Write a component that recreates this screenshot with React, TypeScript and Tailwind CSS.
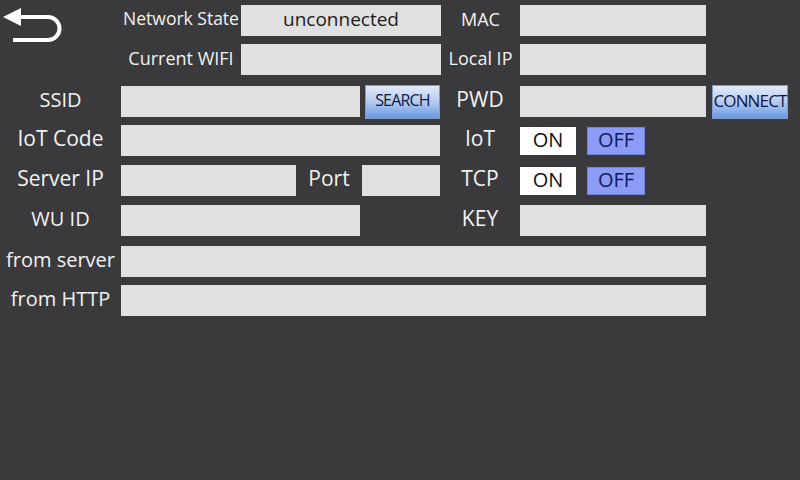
import React from 'react';

const font = { fontFamily: '"Open Sans", "Noto Sans", sans-serif' };

const Field: React.FC<{ w: string; children?: React.ReactNode }> = ({ w, children }) => (
  <div className={`${w} h-[31px] shrink-0 bg-[#e0e0e0] flex items-center justify-center text-[19px] text-[#1c1c1c]`}>
    <span className="-mt-[3px]">{children}</span>
  </div>
);

const Label: React.FC<{ w: string; size?: string; children: React.ReactNode }> = ({ w, size = 'text-[21px]', children }) => (
  <div className={`${w} shrink-0 -mt-[4px] text-center text-[#f2f2f2] ${size} leading-none whitespace-nowrap`}>{children}</div>
);

const BlueButton: React.FC<{ w: string; size: string; children: React.ReactNode }> = ({ w, size, children }) => (
  <button className={`${w} h-[34px] shrink-0 border border-[#7f9acb] bg-gradient-to-b from-[#e2eaf8] via-[#b4cbef] to-[#6a98e2] text-[#0c1848] ${size} tracking-tighter leading-none flex items-center justify-center`}>
    <span className="-mt-[3px]">{children}</span>
  </button>
);

const Toggle: React.FC = () => (
  <div className="flex items-center">
    <div className="w-[56px] h-[28px] bg-white text-[20px] text-[#111] flex items-center justify-center">
      <span className="-mt-[2px]">ON</span>
    </div>
    <div className="ml-[11px] w-[58px] h-[28px] bg-[#8b9bf6] border border-[#6e7fd6] text-[20px] text-[#0f1a58] flex items-center justify-center">
      <span className="-mt-[2px]">OFF</span>
    </div>
  </div>
);

const BackArrow: React.FC = () => (
  <svg width="66" height="40" viewBox="0 0 66 40" className="-mt-[1px]">
    <path d="M19 13 H48 A11.5 11.5 0 0 1 48 36 H13" fill="none" stroke="#fff" strokeWidth="4" />
    <polygon points="3,13 21,4 21,22" fill="#fff" />
  </svg>
);

export default function App() {
  return (
    <div className="w-[800px] h-[480px] bg-[#3a3a3c] overflow-hidden flex flex-col" style={font}>
      {/* row 1 */}
      <div className="mt-[5px] h-[31px] flex items-center">
        <div className="w-[121px] h-[31px] shrink-0 flex items-start">
          <BackArrow />
        </div>
        <Label w="w-[120px]" size="text-[17.5px]">Network State</Label>
        <Field w="w-[200px]">unconnected</Field>
        <Label w="w-[79px]" size="text-[18px]">MAC</Label>
        <Field w="w-[186px]" />
      </div>

      {/* row 2 */}
      <div className="mt-[8px] h-[31px] flex items-center">
        <div className="w-[121px] shrink-0" />
        <Label w="w-[120px]" size="text-[18px]">Current WIFI</Label>
        <Field w="w-[200px]" />
        <Label w="w-[79px]" size="text-[18px]">Local IP</Label>
        <Field w="w-[186px]" />
      </div>

      {/* row 3 */}
      <div className="mt-[11px] h-[31px] flex items-center">
        <Label w="w-[121px]" size="text-[20px]">SSID</Label>
        <Field w="w-[239px]" />
        <div className="ml-[5px]">
          <BlueButton w="w-[75px]" size="text-[16px]">SEARCH</BlueButton>
        </div>
        <Label w="w-[80px]">PWD</Label>
        <Field w="w-[186px]" />
        <div className="ml-[6px]">
          <BlueButton w="w-[76px]" size="text-[17px]">CONNECT</BlueButton>
        </div>
      </div>

      {/* row 4 */}
      <div className="mt-[8px] h-[31px] flex items-center">
        <Label w="w-[121px]">IoT Code</Label>
        <Field w="w-[319px]" />
        <Label w="w-[80px]">IoT</Label>
        <Toggle />
      </div>

      {/* row 5 */}
      <div className="mt-[9px] h-[31px] flex items-center">
        <Label w="w-[121px]">Server IP</Label>
        <Field w="w-[175px]" />
        <Label w="w-[66px]">Port</Label>
        <Field w="w-[78px]" />
        <Label w="w-[80px]">TCP</Label>
        <Toggle />
      </div>

      {/* row 6 */}
      <div className="mt-[9px] h-[31px] flex items-center">
        <Label w="w-[121px]" size="text-[20px]">WU ID</Label>
        <Field w="w-[239px]" />
        <div className="w-[80px] shrink-0" />
        <Label w="w-[80px]">KEY</Label>
        <Field w="w-[186px]" />
      </div>

      {/* row 7 */}
      <div className="mt-[10px] h-[31px] flex items-center">
        <Label w="w-[121px]" size="text-[20px]">from server</Label>
        <Field w="w-[585px]" />
      </div>

      {/* row 8 */}
      <div className="mt-[8px] h-[31px] flex items-center">
        <Label w="w-[121px]" size="text-[20px]">from HTTP</Label>
        <Field w="w-[585px]" />
      </div>
    </div>
  );
}
